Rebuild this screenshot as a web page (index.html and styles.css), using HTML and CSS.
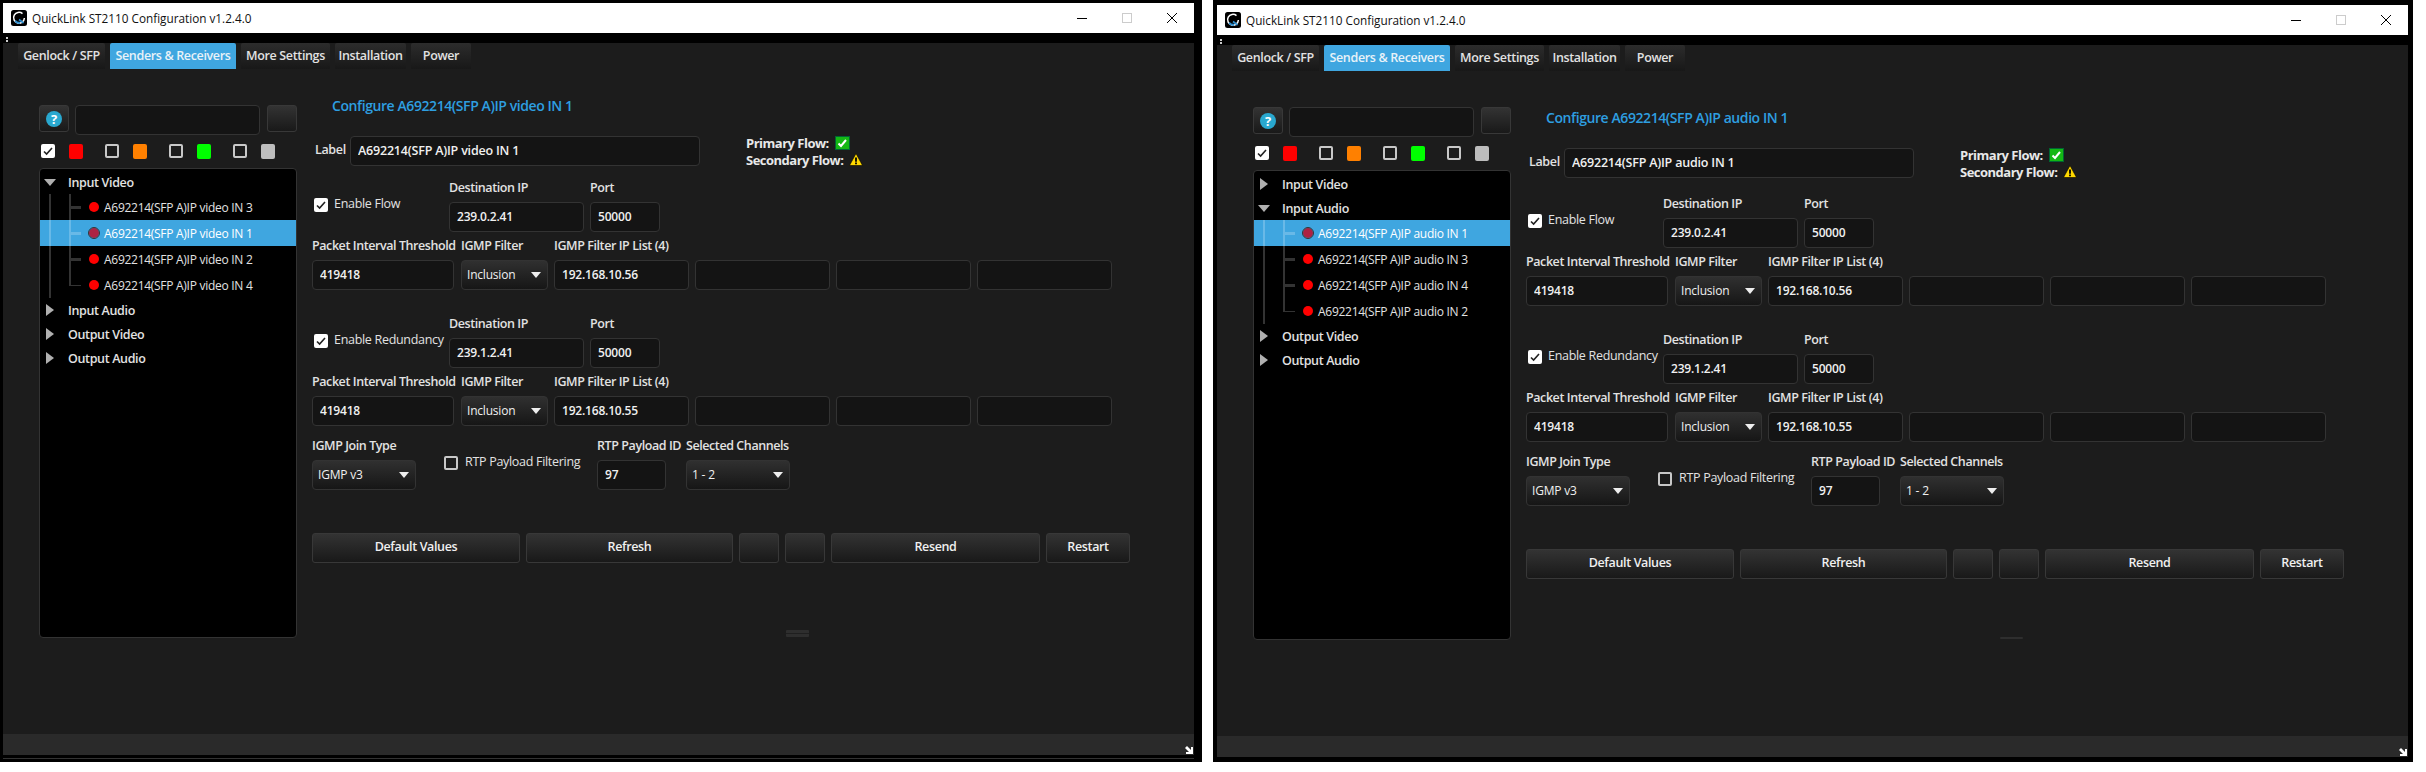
FILE: index.html
```html
<!DOCTYPE html>
<html lang="en">
<head>
    <meta charset="UTF-8">
    <title>QuickLink ST2110 Configuration</title>
    <link rel="stylesheet" href="styles.css">
</head>
<body>
    <!-- Video window -->
    <div class="window window-video">
        <div class="titlebar">
            <svg class="logo" viewBox="0 0 16 16"><rect width="16" height="16" rx="2.5" fill="#000"/><path d="M11.5 3.6A5.4 5.4 0 1 0 13.4 8" fill="none" stroke="#fff" stroke-width="1.5"/><path d="M4.2 10.8a5 5 0 0 0 4.8 2" fill="none" stroke="#2f8fd0" stroke-width="2"/><path d="M8 9.5l4.5 3.5" stroke="#2f8fd0" stroke-width="1.6"/></svg>
            <span class="title-text">QuickLink ST2110 Configuration v1.2.4.0</span>
            <div class="win-controls">
                <span class="win-btn"><svg width="10" height="10" viewBox="0 0 10 10"><path d="M0 5.5h10" stroke="#000"/></svg></span>
                <span class="win-btn"><svg width="10" height="10" viewBox="0 0 10 10"><rect x=".5" y=".5" width="9" height="9" fill="none" stroke="#ccc"/></svg></span>
                <span class="win-btn"><svg width="10" height="10" viewBox="0 0 10 10"><path d="M0 0l10 10M10 0L0 10" stroke="#000" stroke-width="1"/></svg></span>
            </div>
        </div>
        <div class="menu-strip"><span class="grip-dots"></span></div>
        <div class="content">
            <div class="tabs">
                <div class="tab tab-genlock">Genlock / SFP</div>
                <div class="tab tab-senders active">Senders &amp; Receivers</div>
                <div class="tab tab-more">More Settings</div>
                <div class="tab tab-install">Installation</div>
                <div class="tab tab-power">Power</div>
            </div>
            <div class="main">
                <div class="sidebar">
                    <div class="search-row">
                        <button class="help-btn"><span class="help-icon">?</span></button>
                        <input class="search-input" type="text">
                        <button class="square-btn"></button>
                    </div>
                    <div class="filters">
                        <div class="filter"><input type="checkbox" checked><span class="swatch red"></span></div>
                        <div class="filter"><input type="checkbox"><span class="swatch orange"></span></div>
                        <div class="filter"><input type="checkbox"><span class="swatch green"></span></div>
                        <div class="filter"><input type="checkbox"><span class="swatch grey"></span></div>
                    </div>
                    <div class="tree">
                        <div class="tree-head"><span class="arrow-down"></span>Input Video</div>
                        <div class="tree-leaf"><span class="dot"></span>A692214(SFP A)IP video IN 3</div>
                        <div class="tree-leaf selected"><span class="dot"></span>A692214(SFP A)IP video IN 1</div>
                        <div class="tree-leaf"><span class="dot"></span>A692214(SFP A)IP video IN 2</div>
                        <div class="tree-leaf last"><span class="dot"></span>A692214(SFP A)IP video IN 4</div>
                        <div class="tree-head"><span class="arrow-right"></span>Input Audio</div>
                        <div class="tree-head"><span class="arrow-right"></span>Output Video</div>
                        <div class="tree-head"><span class="arrow-right"></span>Output Audio</div>
                    </div>
                </div>
                <div class="form">
                    <h2 class="form-title">Configure A692214(SFP A)IP video IN 1</h2>
                    <div class="label-row">
                        <label class="name-label">Label</label>
                        <input class="name-input" type="text" value="A692214(SFP A)IP video IN 1">
                        <div class="flow-status">
                            <div class="flow-line">Primary Flow: <svg class="flow-ok" viewBox="0 0 15 14"><rect x=".5" y=".5" width="14" height="13" fill="#14b814" stroke="#063"/><path d="M3.5 7.5l2.5 2.5 5-6" fill="none" stroke="#fff" stroke-width="2"/></svg></div>
                            <div class="flow-line">Secondary Flow: <svg class="flow-warn" viewBox="0 0 14 14"><path d="M7 .5l6.5 12H.5z" fill="#ffd800" stroke="#000" stroke-width=".6"/><path d="M7 4.5v4.2M7 9.6v1.7" stroke="#000" stroke-width="1.8"/></svg></div>
                        </div>
                    </div>

                    <div class="row">
                        <label class="check-label"><input type="checkbox" checked>Enable Flow</label>
                        <div class="field"><label>Destination IP</label><input class="w-ip" type="text" value="239.0.2.41"></div>
                        <div class="field"><label>Port</label><input class="w-port" type="text" value="50000"></div>
                    </div>
                    <div class="row row-filter">
                        <div class="field"><label>Packet Interval Threshold</label><input class="w-packet" type="text" value="419418"></div>
                        <div class="field"><label>IGMP Filter</label><select class="w-filter"><option>Inclusion</option></select></div>
                        <div class="field"><label>IGMP Filter IP List (4)</label><input class="w-ip" type="text" value="192.168.10.56"></div>
                        <div class="field"><label>&nbsp;</label><input class="w-ip" type="text"></div>
                        <div class="field"><label>&nbsp;</label><input class="w-ip" type="text"></div>
                        <div class="field"><label>&nbsp;</label><input class="w-ip" type="text"></div>
                    </div>

                    <div class="row row-second">
                        <label class="check-label"><input type="checkbox" checked>Enable Redundancy</label>
                        <div class="field"><label>Destination IP</label><input class="w-ip" type="text" value="239.1.2.41"></div>
                        <div class="field"><label>Port</label><input class="w-port" type="text" value="50000"></div>
                    </div>
                    <div class="row row-filter">
                        <div class="field"><label>Packet Interval Threshold</label><input class="w-packet" type="text" value="419418"></div>
                        <div class="field"><label>IGMP Filter</label><select class="w-filter"><option>Inclusion</option></select></div>
                        <div class="field"><label>IGMP Filter IP List (4)</label><input class="w-ip" type="text" value="192.168.10.55"></div>
                        <div class="field"><label>&nbsp;</label><input class="w-ip" type="text"></div>
                        <div class="field"><label>&nbsp;</label><input class="w-ip" type="text"></div>
                        <div class="field"><label>&nbsp;</label><input class="w-ip" type="text"></div>
                    </div>

                    <div class="row row-join">
                        <div class="field"><label>IGMP Join Type</label><select class="w-join"><option>IGMP v3</option></select></div>
                        <label class="check-label rtp-check"><input type="checkbox">RTP Payload Filtering</label>
                        <div class="field payload-field"><label>RTP Payload ID</label><input class="w-payload" type="text" value="97"></div>
                        <div class="field"><label>Selected Channels</label><select class="w-join"><option>1 - 2</option></select></div>
                    </div>

                    <div class="actions">
                        <button class="w-default">Default Values</button>
                        <button class="w-refresh">Refresh</button>
                        <button class="w-blank"></button>
                        <button class="w-blank"></button>
                        <button class="w-resend">Resend</button>
                        <button class="w-restart">Restart</button>
                    </div>
                    <div class="handle"></div>
                </div>
            </div>
        </div>
        <div class="statusbar"><svg width="8" height="8" viewBox="0 0 8 8"><path d="M8 1v7H1V6h3L0 2l2-2 4 4V1z" fill="#fff"/></svg></div>
    </div>

    <!-- Audio window -->
    <div class="window window-audio">
        <div class="titlebar">
            <svg class="logo" viewBox="0 0 16 16"><rect width="16" height="16" rx="2.5" fill="#000"/><path d="M11.5 3.6A5.4 5.4 0 1 0 13.4 8" fill="none" stroke="#fff" stroke-width="1.5"/><path d="M4.2 10.8a5 5 0 0 0 4.8 2" fill="none" stroke="#2f8fd0" stroke-width="2"/><path d="M8 9.5l4.5 3.5" stroke="#2f8fd0" stroke-width="1.6"/></svg>
            <span class="title-text">QuickLink ST2110 Configuration v1.2.4.0</span>
            <div class="win-controls">
                <span class="win-btn"><svg width="10" height="10" viewBox="0 0 10 10"><path d="M0 5.5h10" stroke="#000"/></svg></span>
                <span class="win-btn"><svg width="10" height="10" viewBox="0 0 10 10"><rect x=".5" y=".5" width="9" height="9" fill="none" stroke="#ccc"/></svg></span>
                <span class="win-btn"><svg width="10" height="10" viewBox="0 0 10 10"><path d="M0 0l10 10M10 0L0 10" stroke="#000" stroke-width="1"/></svg></span>
            </div>
        </div>
        <div class="menu-strip"><span class="grip-dots"></span></div>
        <div class="content">
            <div class="tabs">
                <div class="tab tab-genlock">Genlock / SFP</div>
                <div class="tab tab-senders active">Senders &amp; Receivers</div>
                <div class="tab tab-more">More Settings</div>
                <div class="tab tab-install">Installation</div>
                <div class="tab tab-power">Power</div>
            </div>
            <div class="main">
                <div class="sidebar">
                    <div class="search-row">
                        <button class="help-btn"><span class="help-icon">?</span></button>
                        <input class="search-input" type="text">
                        <button class="square-btn"></button>
                    </div>
                    <div class="filters">
                        <div class="filter"><input type="checkbox" checked><span class="swatch red"></span></div>
                        <div class="filter"><input type="checkbox"><span class="swatch orange"></span></div>
                        <div class="filter"><input type="checkbox"><span class="swatch green"></span></div>
                        <div class="filter"><input type="checkbox"><span class="swatch grey"></span></div>
                    </div>
                    <div class="tree">
                        <div class="tree-head"><span class="arrow-right"></span>Input Video</div>
                        <div class="tree-head"><span class="arrow-down"></span>Input Audio</div>
                        <div class="tree-leaf selected"><span class="dot"></span>A692214(SFP A)IP audio IN 1</div>
                        <div class="tree-leaf"><span class="dot"></span>A692214(SFP A)IP audio IN 3</div>
                        <div class="tree-leaf"><span class="dot"></span>A692214(SFP A)IP audio IN 4</div>
                        <div class="tree-leaf last"><span class="dot"></span>A692214(SFP A)IP audio IN 2</div>
                        <div class="tree-head"><span class="arrow-right"></span>Output Video</div>
                        <div class="tree-head"><span class="arrow-right"></span>Output Audio</div>
                    </div>
                </div>
                <div class="form">
                    <h2 class="form-title">Configure A692214(SFP A)IP audio IN 1</h2>
                    <div class="label-row">
                        <label class="name-label">Label</label>
                        <input class="name-input" type="text" value="A692214(SFP A)IP audio IN 1">
                        <div class="flow-status">
                            <div class="flow-line">Primary Flow: <svg class="flow-ok" viewBox="0 0 15 14"><rect x=".5" y=".5" width="14" height="13" fill="#14b814" stroke="#063"/><path d="M3.5 7.5l2.5 2.5 5-6" fill="none" stroke="#fff" stroke-width="2"/></svg></div>
                            <div class="flow-line">Secondary Flow: <svg class="flow-warn" viewBox="0 0 14 14"><path d="M7 .5l6.5 12H.5z" fill="#ffd800" stroke="#000" stroke-width=".6"/><path d="M7 4.5v4.2M7 9.6v1.7" stroke="#000" stroke-width="1.8"/></svg></div>
                        </div>
                    </div>

                    <div class="row">
                        <label class="check-label"><input type="checkbox" checked>Enable Flow</label>
                        <div class="field"><label>Destination IP</label><input class="w-ip" type="text" value="239.0.2.41"></div>
                        <div class="field"><label>Port</label><input class="w-port" type="text" value="50000"></div>
                    </div>
                    <div class="row row-filter">
                        <div class="field"><label>Packet Interval Threshold</label><input class="w-packet" type="text" value="419418"></div>
                        <div class="field"><label>IGMP Filter</label><select class="w-filter"><option>Inclusion</option></select></div>
                        <div class="field"><label>IGMP Filter IP List (4)</label><input class="w-ip" type="text" value="192.168.10.56"></div>
                        <div class="field"><label>&nbsp;</label><input class="w-ip" type="text"></div>
                        <div class="field"><label>&nbsp;</label><input class="w-ip" type="text"></div>
                        <div class="field"><label>&nbsp;</label><input class="w-ip" type="text"></div>
                    </div>

                    <div class="row row-second">
                        <label class="check-label"><input type="checkbox" checked>Enable Redundancy</label>
                        <div class="field"><label>Destination IP</label><input class="w-ip" type="text" value="239.1.2.41"></div>
                        <div class="field"><label>Port</label><input class="w-port" type="text" value="50000"></div>
                    </div>
                    <div class="row row-filter">
                        <div class="field"><label>Packet Interval Threshold</label><input class="w-packet" type="text" value="419418"></div>
                        <div class="field"><label>IGMP Filter</label><select class="w-filter"><option>Inclusion</option></select></div>
                        <div class="field"><label>IGMP Filter IP List (4)</label><input class="w-ip" type="text" value="192.168.10.55"></div>
                        <div class="field"><label>&nbsp;</label><input class="w-ip" type="text"></div>
                        <div class="field"><label>&nbsp;</label><input class="w-ip" type="text"></div>
                        <div class="field"><label>&nbsp;</label><input class="w-ip" type="text"></div>
                    </div>

                    <div class="row row-join">
                        <div class="field"><label>IGMP Join Type</label><select class="w-join"><option>IGMP v3</option></select></div>
                        <label class="check-label rtp-check"><input type="checkbox">RTP Payload Filtering</label>
                        <div class="field payload-field"><label>RTP Payload ID</label><input class="w-payload" type="text" value="97"></div>
                        <div class="field"><label>Selected Channels</label><select class="w-join"><option>1 - 2</option></select></div>
                    </div>

                    <div class="actions">
                        <button class="w-default">Default Values</button>
                        <button class="w-refresh">Refresh</button>
                        <button class="w-blank"></button>
                        <button class="w-blank"></button>
                        <button class="w-resend">Resend</button>
                        <button class="w-restart">Restart</button>
                    </div>
                    <div class="handle"></div>
                </div>
            </div>
        </div>
        <div class="statusbar"><svg width="8" height="8" viewBox="0 0 8 8"><path d="M8 1v7H1V6h3L0 2l2-2 4 4V1z" fill="#fff"/></svg></div>
    </div>
</body>
</html>
```

FILE: styles.css
```css
* {
    margin: 0;
    padding: 0;
    box-sizing: border-box;
    font-family: 'Open Sans', 'Noto Sans', sans-serif;
}

body {
    display: flex;
    gap: 11px;
    height: 772px;
    background: #fff;
    overflow: hidden;
}

.window {
    display: flex;
    flex-direction: column;
    height: 762px;
    background: #000;
}

.window-video {
    width: 1202px;
    padding: 3px 8px 3px 3px;
}

.window-audio {
    width: 1200px;
    padding: 5px 5px 5px 4px;
}

.titlebar {
    display: flex;
    align-items: center;
    flex: none;
    height: 30px;
    background: #fff;
}

.logo {
    width: 16px;
    height: 16px;
    margin-left: 8px;
}

.title-text {
    margin-left: 5px;
    font-size: 11.75px;
    color: #111;
}

.win-controls {
    display: flex;
    margin-left: auto;
}

.win-btn {
    display: flex;
    align-items: center;
    justify-content: center;
    width: 45px;
    height: 30px;
}

.menu-strip {
    flex: none;
    height: 10px;
    padding: 4px 0 0 3px;
}

.grip-dots {
    display: block;
    width: 2px;
    height: 5px;
    border-top: 2px solid #ccc;
    border-bottom: 2px solid #ccc;
}

.content {
    flex: 1;
    background: #1c1c1c;
}

.tabs {
    display: flex;
    gap: 5px;
    padding-left: 15px;
}

.tab {
    height: 26px;
    line-height: 26px;
    text-align: center;
    font-size: 12.5px;
    font-weight: 600;
    letter-spacing: -0.35px;
    color: #e2e2e2;
    background: linear-gradient(#2c2c2c, #181818);
    border-radius: 2px 2px 0 0;
}

.tab.active {
    background: #3fa6e0;
    color: #e8f2f8;
}

.tab-genlock { width: 87px; }
.tab-senders { width: 126px; }
.tab-more { width: 89px; }
.tab-install { width: 71px; }
.tab-power { width: 60px; }

.main {
    display: flex;
    padding: 27px 0 0 36px;
}

.sidebar {
    flex: none;
    width: 258px;
    margin-top: 9px;
}

.search-row {
    display: flex;
    align-items: flex-start;
}

button {
    padding-bottom: 3px;
    font-size: 12.5px;
    font-weight: 600;
    letter-spacing: -0.35px;
    color: #f0f0f0;
    background: linear-gradient(#333, #191919);
    border: 1px solid #383838;
    border-radius: 3px;
}

.help-btn {
    display: flex;
    align-items: center;
    justify-content: center;
    width: 30px;
    height: 27px;
    padding: 0;
}

.help-icon {
    display: block;
    width: 16px;
    height: 16px;
    line-height: 16px;
    text-align: center;
    font-size: 13px;
    font-weight: 700;
    color: #fff;
    background: #29a8cf;
    border-radius: 50%;
}

.search-input {
    width: 185px;
    margin: 0 7px 0 6px;
}

.square-btn {
    width: 30px;
    height: 27px;
}

.filters {
    display: flex;
    height: 15px;
    margin-top: 9px;
    padding-left: 2px;
}

.filter {
    display: flex;
    gap: 14px;
    width: 66px;
}

.swatch {
    width: 14px;
    height: 15px;
    border-radius: 2px;
}

.red { background: #ff0000; }
.orange { background: #ff8000; }
.green { background: #00ff00; }
.grey { background: #bdbdbd; }

input[type="checkbox"] {
    appearance: none;
    flex: none;
    width: 14px;
    height: 14px;
    background: #1c1c1c;
    border: 2px solid #c8c8c8;
    border-radius: 2px;
}

input[type="checkbox"]:checked {
    background: #fff url("data:image/svg+xml;charset=UTF-8,%3csvg xmlns='http://www.w3.org/2000/svg' viewBox='0 0 14 14'%3e%3cpath d='M3 7.5l2.6 2.6L11 4' fill='none' stroke='%23222' stroke-width='1.6'/%3e%3c/svg%3e") no-repeat center/14px 14px;
    border: 0;
}

.tree {
    height: 470px;
    margin-top: 9px;
    padding-top: 1px;
    background: #000;
    border: 1px solid #333;
    border-radius: 4px;
}

.tree-head {
    display: flex;
    align-items: center;
    height: 24px;
    font-size: 12.5px;
    font-weight: 600;
    letter-spacing: -0.35px;
    color: #e2e2e2;
}

.arrow-down,
.arrow-right {
    flex: none;
    width: 0;
    height: 0;
}

.arrow-down {
    margin: 0 12px 0 4px;
    border-left: 6px solid transparent;
    border-right: 6px solid transparent;
    border-top: 7px solid #b0b0b0;
}

.arrow-right {
    margin: 0 14px 0 6px;
    border-top: 6px solid transparent;
    border-bottom: 6px solid transparent;
    border-left: 8px solid #b0b0b0;
}

/* tree guide lines are drawn as background layers on each leaf row */
.tree-leaf {
    display: flex;
    align-items: center;
    gap: 5px;
    height: 26px;
    padding-left: 49px;
    font-size: 12px;
    letter-spacing: -0.28px;
    color: #e2e2e2;
    background-image: linear-gradient(#333, #333), linear-gradient(#333, #333), linear-gradient(#333, #333);
    background-size: 2px 100%, 2px 100%, 10px 3px;
    background-position: 9px 0, 29px 0, 31px 12px;
    background-repeat: no-repeat;
}

.tree-leaf.last {
    background-size: 2px 100%, 2px 14px, 10px 1px;
    background-position: 9px 0, 29px 0, 31px 13px;
}

.tree-leaf.selected {
    color: #fff;
    background-color: #3fa6e0;
    background-image: linear-gradient(#69b9e7, #69b9e7), linear-gradient(#69b9e7, #69b9e7), linear-gradient(#69b9e7, #69b9e7);
}

.dot {
    flex: none;
    width: 10px;
    height: 10px;
    background: #ff0000;
    border-radius: 50%;
}

.selected .dot {
    background: #ad2242;
    outline: 1px solid #333;
}

.form {
    flex: 1;
    margin-left: 15px;
}

.form-title {
    height: 20px;
    line-height: 20px;
    margin-left: 20px;
    margin-bottom: 20px;
    font-size: 14px;
    font-weight: 600;
    letter-spacing: -0.42px;
    color: #2e9fe0;
}

input[type="text"],
select {
    display: block;
    height: 30px;
    padding: 0 7px 2px;
    font-size: 12px;
    font-weight: 600;
    letter-spacing: -0.2px;
    color: #f0f0f0;
    background: #141414;
    border: 1px solid #333;
    border-radius: 4px;
    outline: none;
}

select {
    appearance: none;
    padding: 0 5px 2px;
    font-weight: 400;
    background: url("data:image/svg+xml;charset=UTF-8,%3csvg xmlns='http://www.w3.org/2000/svg' viewBox='0 0 10 6'%3e%3cpath d='M0 0h10L5 6z' fill='%23eee'/%3e%3c/svg%3e") no-repeat right 6px center/10px 6px, linear-gradient(#303030, #161616);
}

.label-row {
    display: flex;
    align-items: flex-start;
    margin-bottom: 14px;
}

.window-audio .form {
    margin-top: 10px;
}

.window-audio .label-row {
    margin-bottom: 18px;
}

.name-label {
    width: 38px;
    padding-left: 3px;
    line-height: 28px;
    font-size: 12.5px;
    font-weight: 600;
    letter-spacing: -0.35px;
    color: #e2e2e2;
}

.label-row .name-input {
    width: 350px;
    font-size: 12.5px;
}

.flow-status {
    margin: -2px 0 0 46px;
}

.flow-line {
    display: flex;
    align-items: center;
    gap: 6px;
    height: 17px;
    font-size: 13px;
    font-weight: 700;
    letter-spacing: -0.5px;
    color: #e8e8e8;
}

.flow-ok {
    width: 15px;
    height: 14px;
}

.flow-warn {
    width: 14px;
    height: 14px;
}

.row {
    display: flex;
    gap: 6px;
}

.row-filter {
    margin-top: 8px;
}

.row-filter .field:first-child {
    width: 142px;
    margin-right: 1px;
}

.row-second {
    margin-top: 28px;
}

.row-join {
    margin-top: 14px;
}

.field label {
    display: block;
    height: 14px;
    line-height: 12px;
    margin-bottom: 6px;
    font-size: 12.5px;
    font-weight: 600;
    letter-spacing: -0.42px;
    color: #e2e2e2;
    white-space: nowrap;
}

.check-label {
    display: flex;
    align-items: flex-start;
    gap: 6px;
    width: 131px;
    height: 14px;
    margin-top: 16px;
    padding-left: 2px;
    line-height: 12px;
    font-size: 12.5px;
    font-weight: 400;
    letter-spacing: -0.3px;
    color: #e2e2e2;
    white-space: nowrap;
}

.rtp-check {
    width: 147px;
    margin-left: 22px;
    padding-left: 0;
    gap: 7px;
}

.payload-field {
    width: 83px;
}

.w-ip { width: 135px; }
.w-port { width: 70px; }
.w-packet { width: 142px; }
.w-filter { width: 87px; }
.w-join { width: 104px; }
.w-payload { width: 69px; }

.actions {
    display: flex;
    gap: 6px;
    margin-top: 43px;
}

.actions button {
    height: 30px;
}

.w-default { width: 208px; }
.w-refresh { width: 207px; }
.w-blank { width: 40px; }
.w-resend { width: 209px; }
.w-restart { width: 84px; }

.handle {
    width: 23px;
    height: 7px;
    margin: 67px 0 0 474px;
    background: linear-gradient(#2e2e2e 40%, #1f1f1f 40%, #1f1f1f 60%, #2e2e2e 60%);
    border-radius: 1px;
}

.window-audio .handle {
    height: 2px;
    margin-top: 58px;
    background: #2e2e2e;
}

.statusbar {
    display: flex;
    align-items: flex-end;
    justify-content: flex-end;
    flex: none;
    height: 21px;
    padding: 0 1px 1px 0;
    background: #2a2a2a;
}

.window-video .statusbar {
    margin-bottom: 4px;
    box-shadow: 0 3px 0 #000, 0 4px 0 #333;
}
```
